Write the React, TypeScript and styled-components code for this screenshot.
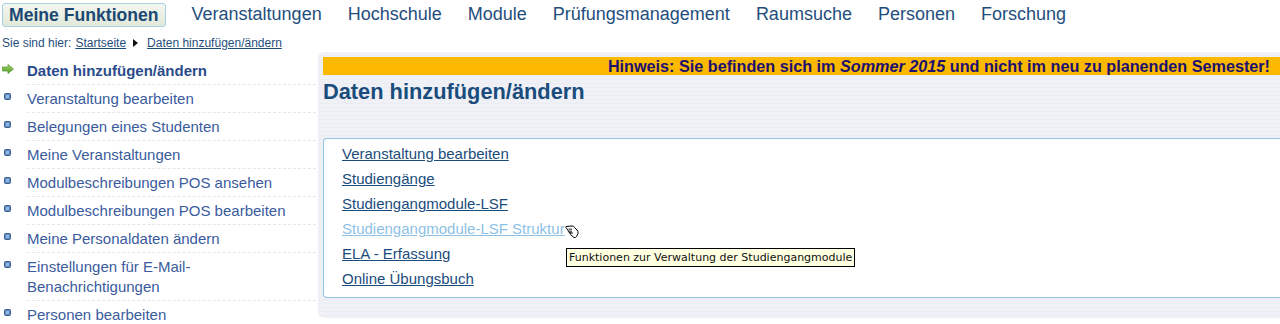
import React from "react"
import styled, { createGlobalStyle } from "styled-components"

const GlobalStyle = createGlobalStyle`
	html, body {
		margin: 0;
		padding: 0;
		overflow: hidden;
		background: #fff;
	}
	body {
		font-family: "Liberation Sans", Arial, sans-serif;
	}
`

const Page = styled.div`
	width: 1292px;
	display: flex;
	flex-direction: column;
`

const TopNav = styled.nav`
	display: flex;
	align-items: flex-start;
	gap: 26px;
	height: 28px;
	padding: 3px 0 0 2px;
`

const NavItem = styled.a<{ active?: boolean }>`
	font-size: 18px;
	color: #1f4e7d;
	text-decoration: none;
	line-height: 22px;
	font-weight: ${p => p.active ? 'bold' : 'normal'};
	${p => p.active && `
		font-size: 17.6px;
		padding: 0 6px;
		height: 22px;
		border: 1px solid #a9cfe6;
		border-radius: 3px;
		background: linear-gradient(#f3f6ef, #e1e9d9);
		color: #1b4873;
	`}
`

const Breadcrumb = styled.div`
	display: flex;
	align-items: center;
	font-size: 12px;
	color: #1f4e7d;
	height: 24px;
	padding-left: 2px;
	gap: 4px;

	a {
		color: #1f4e7d;
		text-decoration: underline;
	}
	svg {
		margin: 0 5px 0 3px;
	}
`

const Body = styled.div`
	display: flex;
	align-items: flex-start;
`

const Sidebar = styled.ul`
	width: 318px;
	margin: 2px 0 0 0;
	padding: 0;
	list-style: none;
	flex-shrink: 0;
`

const SideItem = styled.li<{ current?: boolean }>`
	display: flex;
	align-items: flex-start;
	padding-left: 2px;

	.icon {
		width: 25px;
		flex-shrink: 0;
		height: 20px;
		display: flex;
		align-items: center;
		padding-top: 2px;
	}
	.label {
		flex: 1;
		margin-right: 2px;
		padding: 4px 0 3px 0;
		border-bottom: 1px dashed #e4e6ea;
		font-size: 15px;
		line-height: 20px;
		color: ${p => p.current ? '#2a4b8b' : '#3a5b9d'};
		font-weight: ${p => p.current ? 'bold' : 'normal'};
	}
`

const Main = styled.main`
	flex: 1;
	margin-top: -3px;
	padding: 5px 0 20px 5px;
	border-radius: 6px 0 0 6px;
	background: repeating-linear-gradient(#f0f1f6 0 3px, #ebedf3 3px 4px);
`

const Notice = styled.div`
	background: #fdb900;
	color: #1c1070;
	font-size: 16.2px;
	font-weight: bold;
	line-height: 18px;
	text-align: right;
	padding-right: 22px;

	em {
		font-style: italic;
	}
`

const Heading = styled.h1`
	margin: 4px 0 0 0;
	font-size: 21.8px;
	line-height: 26px;
	color: #1a4c7d;
	font-weight: bold;
	height: 59px;
`

const LinkBox = styled.ul`
	margin: 0;
	list-style: none;
	padding: 2px 0 6px 18px;
	background: #fff;
	border: 1px solid #93c3e3;
	border-right: none;
	border-radius: 4px 0 0 4px;
	position: relative;
`

const LinkItem = styled.li<{ hover?: boolean }>`
	font-size: 15px;
	line-height: 25px;
	position: relative;

	a {
		color: ${p => p.hover ? '#8dbfe4' : '#1b4c7c'};
		text-decoration: underline;
	}
`

const Tooltip = styled.div`
	position: absolute;
	left: 224px;
	top: 32px;
	white-space: nowrap;
	font-family: "DejaVu Sans", sans-serif;
	font-size: 11px;
	line-height: 17px;
	padding: 0 2px;
	color: #111;
	background: #ffffe1;
	border: 1px solid #000;
	z-index: 2;
`

const Cursor = styled.svg`
	position: absolute;
	left: 223px;
	top: 7px;
	z-index: 3;
`

function Arrow() {
	return <svg width="12" height="10" viewBox="0 0 12 10">
		<defs>
			<linearGradient id="ga" x1="0" y1="0" x2="0" y2="1">
				<stop offset="0" stopColor="#a6d86a" />
				<stop offset="1" stopColor="#4f9a2a" />
			</linearGradient>
		</defs>
		<path d="M0.5 3 H6 V0.5 L11.5 5 L6 9.5 V7 H0.5 Z" fill="url(#ga)" stroke="#5f9c3c" strokeWidth="0.8" />
	</svg>
}

function Bullet() {
	return <svg width="12" height="8" viewBox="0 0 12 8">
		<rect x="2.5" y="0.5" width="6" height="6" rx="1" fill="#5e8bc4" stroke="#3f5f8f" />
		<rect x="4" y="2" width="3" height="3" fill="#8fb5e0" />
	</svg>
}

const sideItems = [
	'Daten hinzufügen/ändern',
	'Veranstaltung bearbeiten',
	'Belegungen eines Studenten',
	'Meine Veranstaltungen',
	'Modulbeschreibungen POS ansehen',
	'Modulbeschreibungen POS bearbeiten',
	'Meine Personaldaten ändern',
	'Einstellungen für E-Mail-Benachrichtigungen',
	'Personen bearbeiten',
]

const links = [
	'Veranstaltung bearbeiten',
	'Studiengänge',
	'Studiengangmodule-LSF',
	'Studiengangmodule-LSF Struktur',
	'ELA - Erfassung',
	'Online Übungsbuch',
]

const navItems = ['Veranstaltungen', 'Hochschule', 'Module', 'Prüfungsmanagement', 'Raumsuche', 'Personen', 'Forschung']

export default function App() {
	return <Page>
		<GlobalStyle />
		<TopNav>
			<NavItem active>Meine Funktionen</NavItem>
			{navItems.map(n => <NavItem key={n}>{n}</NavItem>)}
		</TopNav>
		<Breadcrumb>
			<span>Sie sind hier:</span>
			<a>Startseite</a>
			<svg width="5" height="8" viewBox="0 0 5 8"><path d="M0 0 L5 4 L0 8 Z" fill="#111" /></svg>
			<a>Daten hinzufügen/ändern</a>
		</Breadcrumb>
		<Body>
			<Sidebar>
				{sideItems.map((s, i) => <SideItem key={s} current={i === 0}>
					<span className="icon">{i === 0 ? <Arrow /> : <Bullet />}</span>
					<span className="label">{s === 'Einstellungen für E-Mail-Benachrichtigungen' ? <>Einstellungen für E-Mail-<br />Benachrichtigungen</> : s}</span>
				</SideItem>)}
			</Sidebar>
			<Main>
				<Notice>Hinweis: Sie befinden sich im <em>Sommer 2015</em> und nicht im neu zu planenden Semester!</Notice>
				<Heading>Daten hinzufügen/ändern</Heading>
				<LinkBox>
					{links.map((l, i) => <LinkItem key={l} hover={i === 3}>
						<a>{l}</a>
						{i === 3 && <>
							<Cursor width="15" height="16" viewBox="0 0 15 16">
								<path d="M1 3.5 L7 3 Q9 3 9.5 4.5 L12 7 Q13.5 8.5 13 10.5 L11.5 13.5 Q10.5 15 9 14.5 L5.5 11.5 Q4.5 10.5 5.5 10 L6.5 10 L4 9.5 Q3 9 3.5 8 L3 7.5 Q2 7 2.5 6 L1.5 5.5 Q0.5 4.5 1 3.5 Z" fill="#fff" stroke="#000" strokeWidth="1" strokeLinejoin="round" />
								<path d="M3.5 6 L7 6.3 M3.5 8 L7 8.3 M6.5 10 L8 10" stroke="#000" strokeWidth="0.9" fill="none" />
							</Cursor>
							<Tooltip>Funktionen zur Verwaltung der Studiengangmodule</Tooltip>
						</>}
					</LinkItem>)}
				</LinkBox>
			</Main>
		</Body>
	</Page>
}
